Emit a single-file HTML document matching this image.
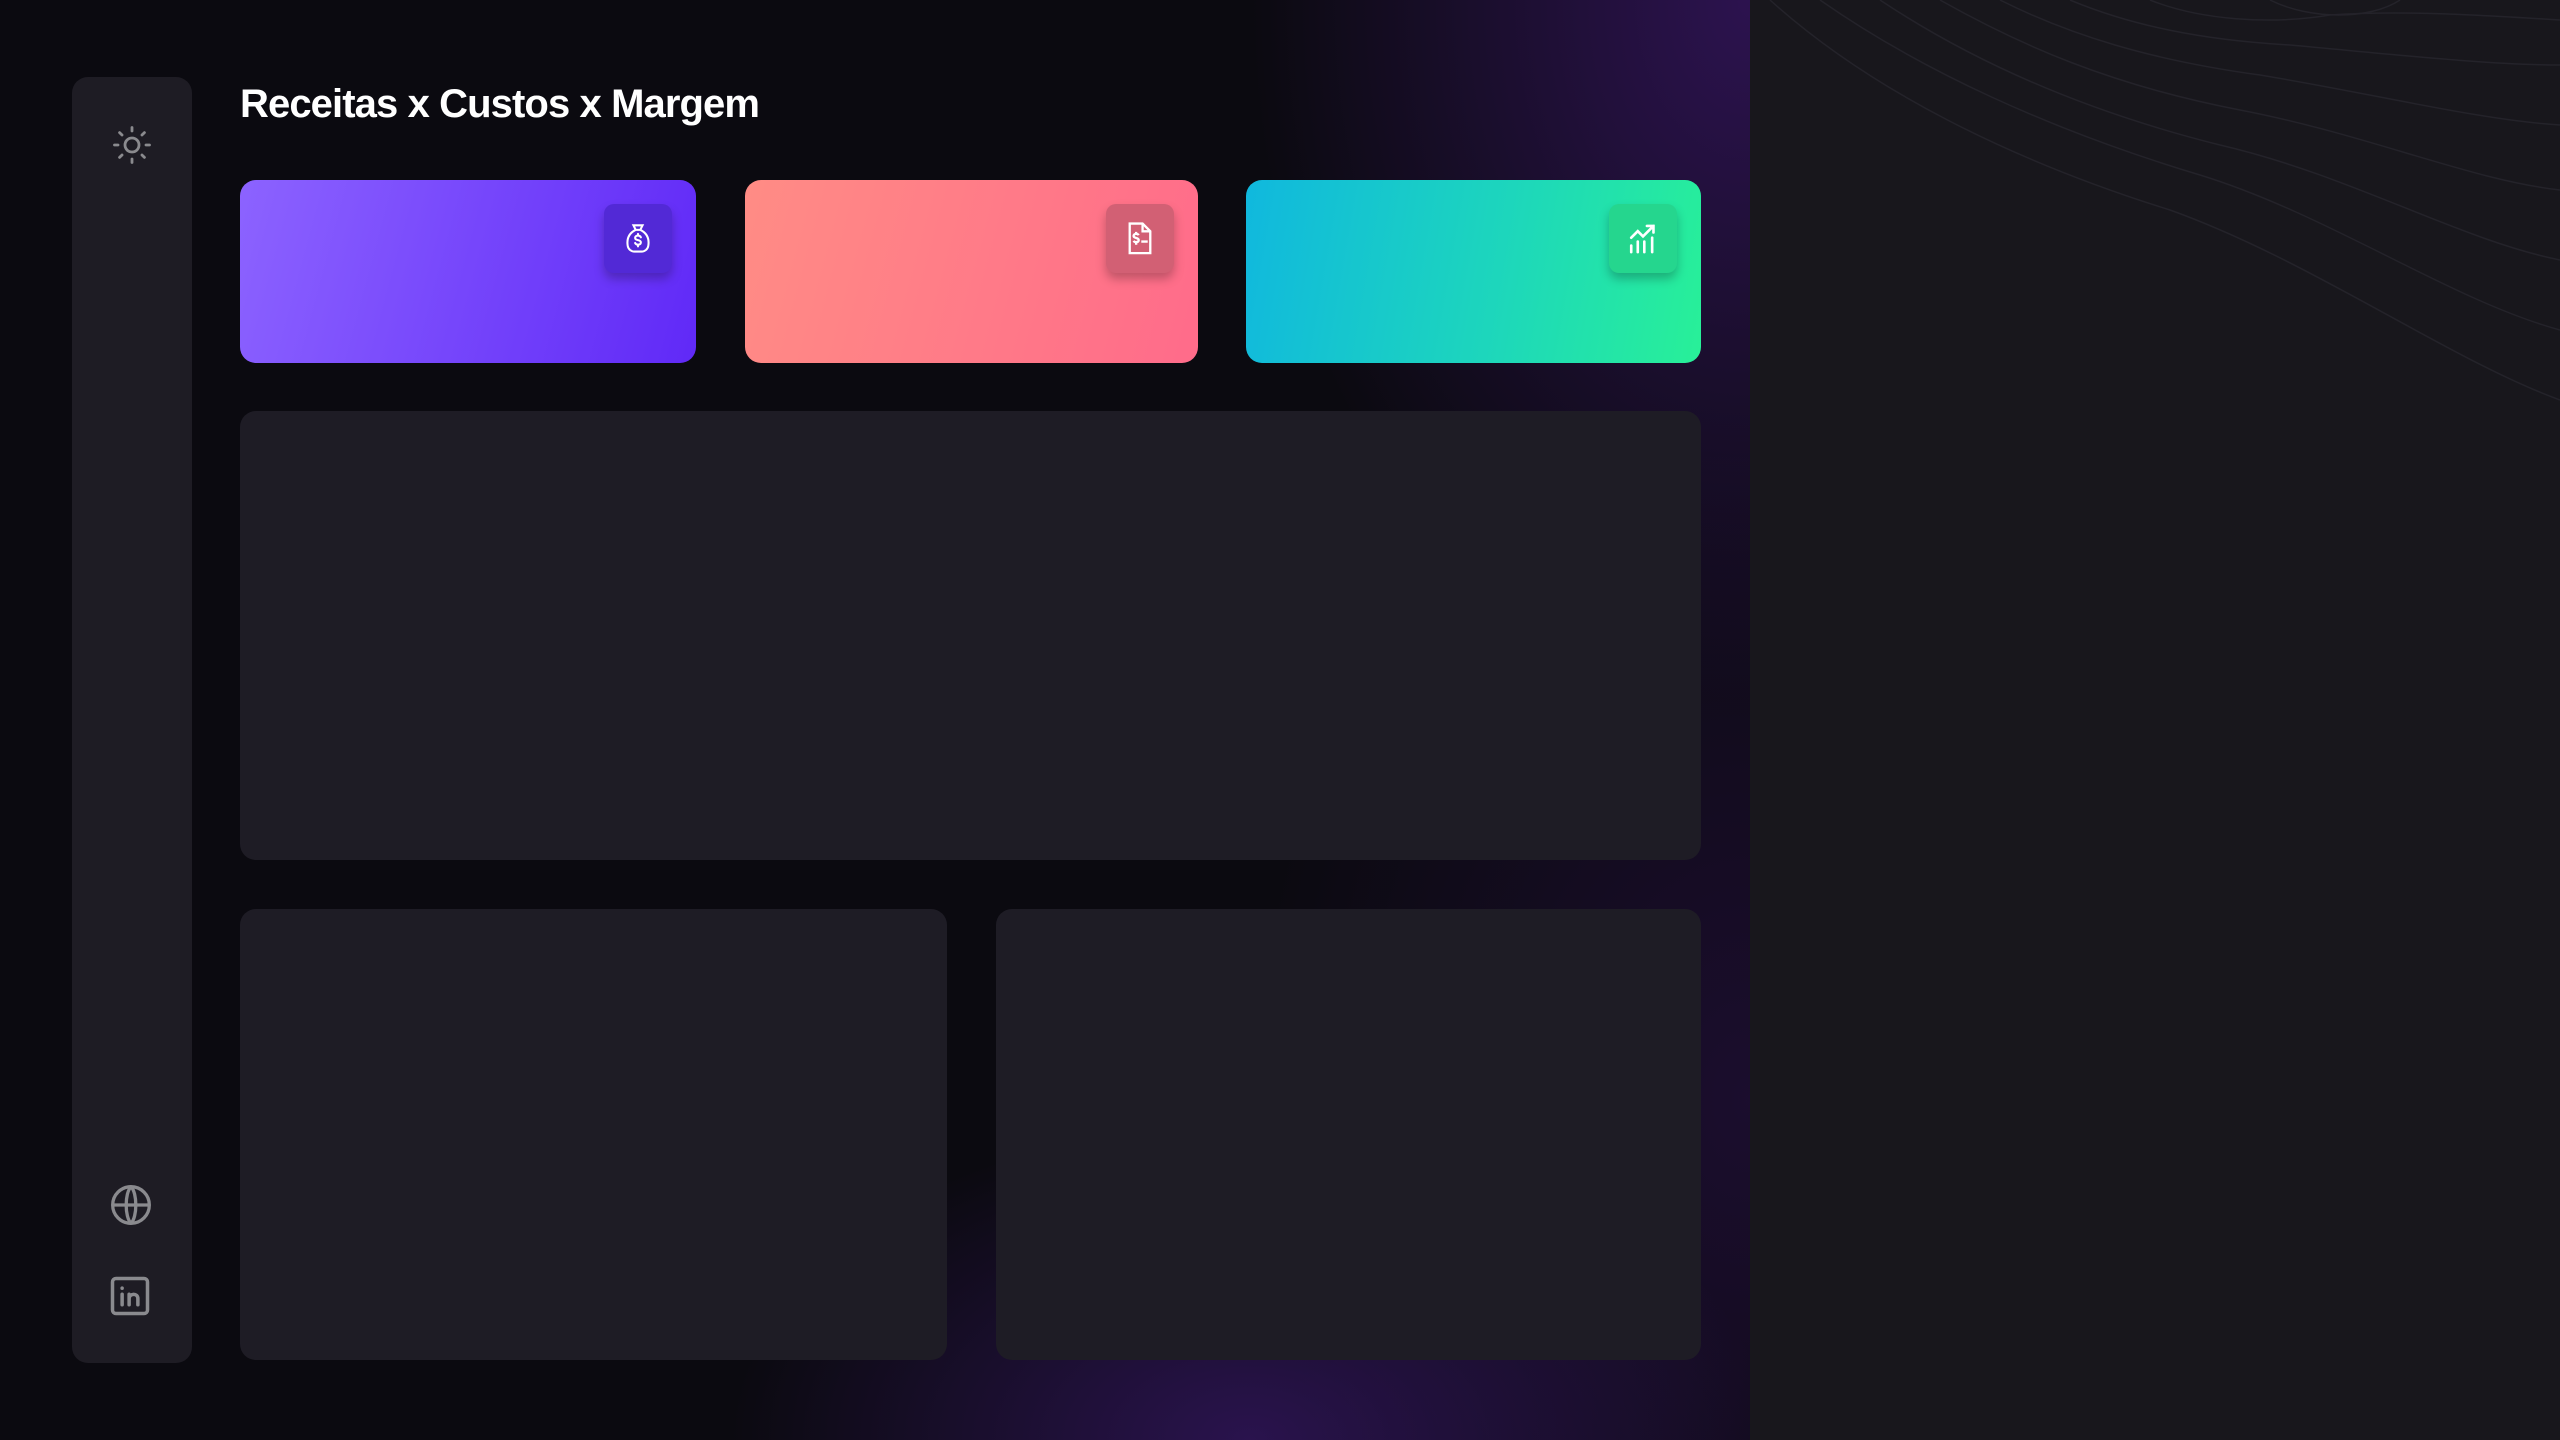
<!DOCTYPE html>
<html><head><meta charset="utf-8"><style>
*{margin:0;padding:0;box-sizing:border-box}
body{width:2560px;height:1440px;overflow:hidden;background:#18171c;font-family:"Segoe UI","Liberation Sans",sans-serif;position:relative}
#main{position:absolute;left:0;top:0;width:1750px;height:1440px;background:
radial-gradient(ellipse 520px 320px at 1250px 1440px,rgba(52,22,98,.75),transparent),
radial-gradient(ellipse 500px 700px at 1750px 0px,rgba(50,20,90,.85),transparent),
radial-gradient(ellipse 500px 700px at 1750px 1100px,rgba(40,16,70,.55),transparent),
#0b0a10}
.side{position:absolute;left:72px;top:77px;width:120px;height:1286px;background:#1e1c24;border-radius:16px}
.panel{position:absolute;background:#1e1c25;border-radius:16px}
h1{position:absolute;left:240px;top:82px;color:#fff;font-size:40px;font-weight:bold;letter-spacing:-0.9px}
.card{position:absolute;top:180px;height:183px;border-radius:16px}
.ib{position:absolute;top:24px;width:68px;height:69px;border-radius:10px;box-shadow:0 6px 10px rgba(0,0,0,.25);display:flex;align-items:center;justify-content:center}
</style></head><body>
<div id="main">
<div class="side"></div>
<svg style="position:absolute;left:111px;top:124px" width="42" height="42" viewBox="0 0 24 24" fill="none" stroke="#8a8a8e" stroke-width="1.6" stroke-linecap="round"><circle cx="12" cy="12" r="4"/><path d="M12 2v2M12 20v2M2 12h2M20 12h2M4.9 4.9l1.4 1.4M17.7 17.7l1.4 1.4M4.9 19.1l1.4-1.4M17.7 6.3l1.4-1.4"/></svg>
<svg style="position:absolute;left:109px;top:1183px" width="44" height="44" viewBox="0 0 24 24" fill="none" stroke="#8a8a8e" stroke-width="1.8"><circle cx="12" cy="12" r="10"/><path d="M2 12h20M12 2c-3.5 3.5-3.5 16.5 0 20M12 2c3.5 3.5 3.5 16.5 0 20"/></svg>
<svg style="position:absolute;left:109px;top:1275px" width="42" height="42" viewBox="0 0 24 24" fill="none" stroke="#8a8a8e" stroke-width="2" stroke-linecap="round"><rect x="2" y="2" width="20" height="20" rx="2"/><path d="M7.5 11v6M7.5 7.5v.1M11.5 17v-6M11.5 13.5c0-3 5-3.5 5 0V17"/></svg>
<h1>Receitas x Custos x Margem</h1>
<div class="card" style="left:240px;width:456px;background:linear-gradient(105deg,#8c63ff,#6029f7)"><div class="ib" style="left:364px;background:#5229d6"><svg width="28" height="32" viewBox="0 0 24 28" fill="none" stroke="#fff" stroke-width="1.8" stroke-linecap="round"><path d="M8 2h8l-2 4h-4zM10 6C4 9 2 14 3 20c.5 3 3 5 6 5h6c3 0 5.5-2 6-5 1-6-1-11-7-14"/><path d="M14.5 12.5c-.5-1-1.5-1.5-2.5-1.5-1.5 0-2.5.8-2.5 2s1 1.7 2.5 2 2.5.8 2.5 2-1 2-2.5 2c-1 0-2-.5-2.5-1.5M12 9.5v1.5M12 19v1.5"/></svg></div></div>
<div class="card" style="left:745px;width:453px;background:linear-gradient(105deg,#ff8c85,#ff6b8a)"><div class="ib" style="left:361px;background:#d26074"><svg width="32" height="36" viewBox="0 0 24 28" fill="none" stroke="#fff" stroke-width="1.8"><path d="M4 2h10l6 6v17H4z"/><path d="M14 2v6h6"/><path d="M11 11c-.5-.8-1.2-1-2-1-1.3 0-2 .7-2 1.6s.8 1.3 2 1.6 2 .7 2 1.7-.8 1.6-2 1.6c-.8 0-1.6-.4-2-1.1M9 8.5v1.5M9 17v1.5M13 16h5"/></svg></div></div>
<div class="card" style="left:1246px;width:455px;background:linear-gradient(100deg,#10b8de,#1dd6bc 55%,#28f098)"><div class="ib" style="left:363px;background:#25d68e"><svg width="32" height="34" viewBox="0 0 24 26" fill="none" stroke="#fff" stroke-width="2" stroke-linecap="round"><path d="M3 12l5-5 4 4 8-8M15 3h5v5M3 18v5M8 15v8M13 15v8M19 12v11"/></svg></div></div>
<div class="panel" style="left:240px;top:411px;width:1461px;height:449px"></div>
<div class="panel" style="left:240px;top:909px;width:707px;height:451px"></div>
<div class="panel" style="left:996px;top:909px;width:705px;height:451px"></div>
</div>
<svg style="position:absolute;left:1750px;top:0" width="810" height="420" viewBox="0 0 810 420" fill="none" stroke="#24232a" stroke-width="1.5">
<path d="M20 0C120 90 260 160 420 210 560 260 700 360 810 400"/>
<path d="M70 0C170 70 300 130 450 175 580 215 700 300 810 330"/>
<path d="M130 0C220 60 330 110 470 145 600 175 710 240 810 260"/>
<path d="M190 0C270 45 360 85 490 110 620 135 720 180 810 190"/>
<path d="M250 0C320 35 400 60 510 75 630 95 730 120 810 125"/>
<path d="M320 0C380 25 450 40 540 45 650 55 740 65 810 65"/>
<path d="M400 0C450 20 520 25 580 15 650 10 730 15 810 20"/>
<path d="M520 0C560 20 620 20 650 0"/>
</svg>
</body></html>
